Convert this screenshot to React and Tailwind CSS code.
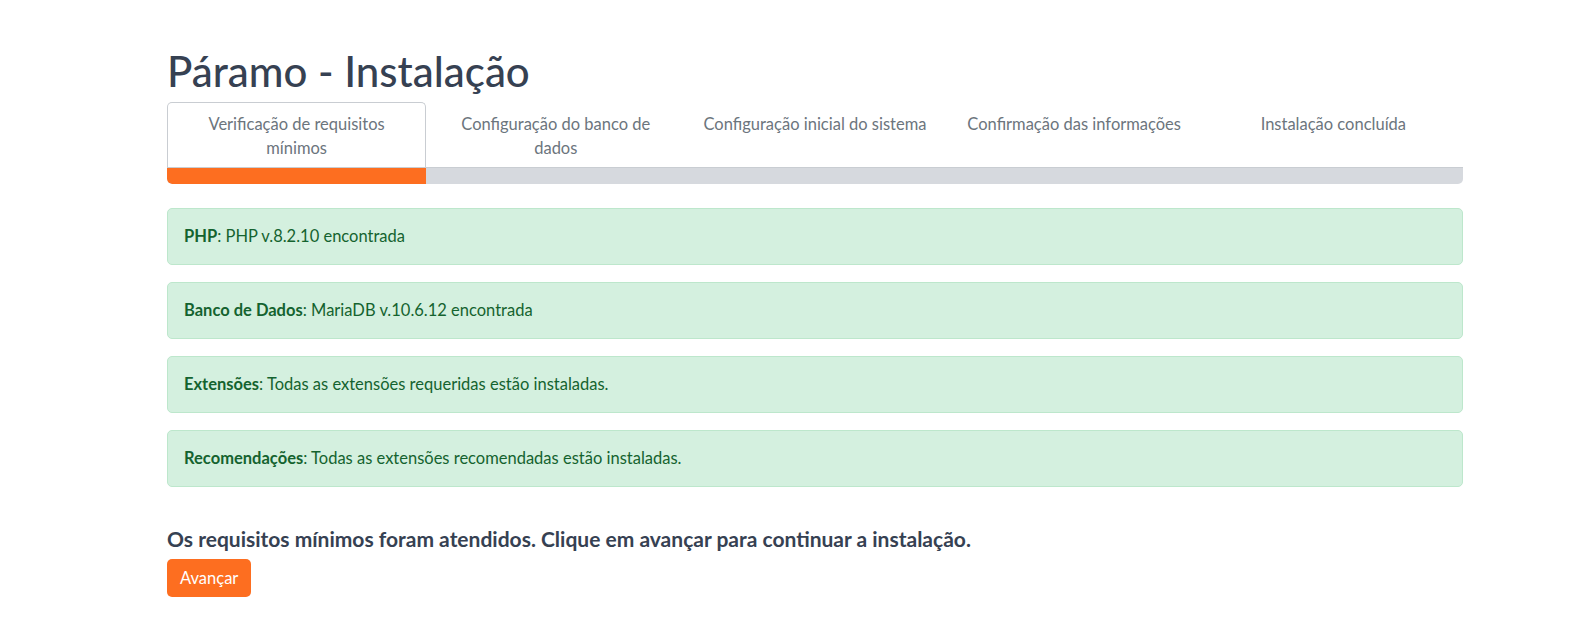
import React from "react";

const steps = [
    { title: "Verificação de requisitos mínimos", pad: "px-[30px]" },
    { title: "Configuração do banco de dados", pad: "px-[26px]" },
    { title: "Configuração inicial do sistema", pad: "px-[8px]" },
    { title: "Confirmação das informações", pad: "px-[8px]" },
    { title: "Instalação concluída", pad: "px-[8px]" },
];

const checks = [
    { label: "PHP", text: "PHP v.8.2.10 encontrada" },
    { label: "Banco de Dados", text: "MariaDB v.10.6.12 encontrada" },
    { label: "Extensões", text: "Todas as extensões requeridas estão instaladas." },
    { label: "Recomendações", text: "Todas as extensões recomendadas estão instaladas." },
];

function App() {
    const current = 0;

    return (
        <div className="min-h-screen bg-white font-['Lato','Liberation_Sans',sans-serif] text-[#364152]">
            <div className="ml-[167px] w-[1296px] pt-[46px]">
                <h1 className="text-[42px] font-medium leading-[50px] mb-[6px]">Páramo - Instalação</h1>

                {/* abas das etapas */}
                <div className="flex border-b border-[#c9cdd2]">
                    {steps.map((step, i) => (
                        <div
                            key={step.title}
                            className={
                                (i === current
                                    ? "-mb-px border border-b-0 border-[#c9cdd2] rounded-t-[5px] bg-white "
                                    : "border border-transparent ") +
                                step.pad +
                                " w-1/5 shrink-0 h-[65px] pt-[9px] text-center text-[16.5px] leading-[24px] text-[#6c757d]"
                            }
                        >
                            {step.title}
                        </div>
                    ))}
                </div>

                {/* barra de progresso */}
                <div className="h-[16px] bg-[#d6d9de] rounded-b-[5px] overflow-hidden flex">
                    <div className="h-full bg-[#fd6e20] rounded-bl-[5px]" style={{ width: `${((current + 1) / steps.length) * 100}%` }} />
                </div>

                <div className="mt-[24px] flex flex-col gap-[17px]">
                    {checks.map((c) => (
                        <div
                            key={c.label}
                            className="h-[57px] flex items-center px-[16px] bg-[#d4f0df] border border-[#bde7cc] rounded-[5px] text-[16.5px] text-[#14632f]"
                        >
                            <span>
                                <b className="font-bold">{c.label}</b>: {c.text}
                            </span>
                        </div>
                    ))}
                </div>

                <p className="mt-[38px] text-[21px] font-bold leading-[28px]">
                    Os requisitos mínimos foram atendidos. Clique em avançar para continuar a instalação.
                </p>
                <button className="mt-[6px] h-[38px] px-[13px] bg-[#fd6e20] text-white text-[16.5px] rounded-[5px]">
                    Avançar
                </button>
            </div>
        </div>
    );
}

export default App;
